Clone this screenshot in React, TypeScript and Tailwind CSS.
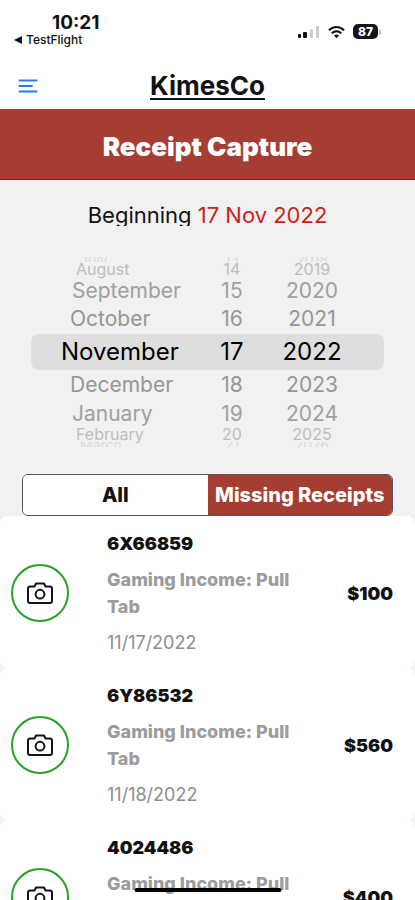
import React, { useState } from "react";

const wheel = [
  { month: "July", day: "13", year: "2018", row: "h-[5px] leading-[5px] overflow-hidden", text: "text-[14px] text-[#d8d8d8]", inset: "pl-20" },
  { month: "August", day: "14", year: "2019", row: "h-[15px] leading-[15px]", text: "text-[16px] text-[#bdbdbd]", inset: "pl-19" },
  { month: "September", day: "15", year: "2020", row: "h-[27px] leading-[27px]", text: "text-[21px] text-[#a0a0a0]", inset: "pl-18" },
  { month: "October", day: "16", year: "2021", row: "h-[30px] leading-[30px]", text: "text-[21px] text-[#969696]", inset: "pl-[70px]" },
  { month: "November", day: "17", year: "2022", row: "h-9 leading-9", text: "text-[24px] text-black", inset: "pl-[61px]" },
  { month: "December", day: "18", year: "2023", row: "h-[30px] leading-[30px]", text: "text-[21px] text-[#969696]", inset: "pl-[70px]" },
  { month: "January", day: "19", year: "2024", row: "h-[27px] leading-[27px]", text: "text-[21px] text-[#a0a0a0]", inset: "pl-18" },
  { month: "February", day: "20", year: "2025", row: "h-[15px] leading-[15px]", text: "text-[16px] text-[#bdbdbd]", inset: "pl-19" },
  { month: "March", day: "21", year: "2026", row: "h-[5px] leading-[5px] overflow-hidden", text: "text-[14px] text-[#d8d8d8]", inset: "pl-20" },
];

const receipts = [
  { id: "6X66859", category: "Gaming Income: Pull Tab", date: "11/17/2022", amount: "$100" },
  { id: "6Y86532", category: "Gaming Income: Pull Tab", date: "11/18/2022", amount: "$560" },
  { id: "4024486", category: "Gaming Income: Pull Tab", date: "11/18/2022", amount: "$400" },
];

function StatusBar() {
  return (
    <div className="flex h-[62px] items-start justify-between pt-3 pr-[34px] pl-[14px]">
      <div>
        <div className="pl-[38px] text-[19px] leading-[22px] font-bold">10:21</div>
        <button className="flex items-center gap-1 text-[12px] leading-[12px] font-medium">
          <svg width="8" height="8" viewBox="0 0 8 8" aria-hidden="true">
            <path d="M0 4 8 0v8z" fill="#111" />
          </svg>
          TestFlight
        </button>
      </div>
      <div className="flex items-center gap-2 pt-3">
        <svg width="22" height="14" viewBox="0 0 22 14" aria-hidden="true">
          <rect x="0" y="9" width="3" height="4" rx="1" fill="#111" />
          <rect x="5" y="7" width="4" height="6" rx="1" fill="#111" />
          <rect x="12" y="4" width="3" height="9" rx="1" fill="#ccc" />
          <rect x="18" y="1" width="3" height="12" rx="1" fill="#ccc" />
        </svg>
        <svg width="17" height="14" viewBox="0 0 17 14" fill="none" stroke="#111" strokeWidth="2.2" aria-hidden="true">
          <path d="M1 5.2c4.4-4.3 10.6-4.3 15 0" />
          <path d="M3.8 8.3c2.8-2.7 6.6-2.7 9.4 0" />
          <path d="M5.9 10.5c1.6-1.4 3.6-1.4 5.2 0L8.5 13.2z" fill="#111" stroke="none" />
        </svg>
        <div className="flex items-center gap-px">
          <span className="flex h-[15px] w-[25px] items-center justify-center rounded-[5px] bg-[#151515] text-[12px] leading-[15px] font-extrabold text-white">87</span>
          <span className="h-[6px] w-[2px] rounded-r-full bg-[#c4c4c4]" />
        </div>
      </div>
    </div>
  );
}

function CameraIcon() {
  return (
    <svg width="28" height="24" viewBox="0 0 28 24" fill="none" stroke="#151515" strokeWidth="2" strokeLinejoin="round" aria-hidden="true">
      <path d="M4 5.500H8.500L10 2.500H18L19.500 5.500H24Q26 5.500 26 7.500V20Q26 22 24 22H4Q2 22 2 20V7.500Q2 5.500 4 5.500Z" />
      <circle cx="14" cy="13.2" r="4.4" />
    </svg>
  );
}

export default function App() {
  const [filter, setFilter] = useState("missing");
  return (
    <div className="relative h-screen overflow-hidden bg-[#f1f1f1] font-['Inter','Liberation_Sans',sans-serif] text-[#111]">
      <header className="bg-white">
        <StatusBar />
        <div className="grid h-[47px] grid-cols-3 items-center px-[18px]">
          <button aria-label="Open menu" className="justify-self-start">
            <svg width="20" height="14" viewBox="0 0 20 14" stroke="#2878e8" strokeWidth="2" strokeLinecap="round" aria-hidden="true">
              <path d="M1.5 1.5h17M1.5 7h12.5M1.5 12.5h17" />
            </svg>
          </button>
          <a href="#home" className="justify-self-center text-[26px] leading-[30px] font-bold underline decoration-2 underline-offset-3">KimesCo</a>
        </div>
      </header>

      <h1 className="flex h-[71px] items-center justify-center border-b border-[#941c14] bg-[#a63d32] pt-1 text-[26px] font-black text-white">Receipt Capture</h1>

      <main>
        <p className="mt-5 h-[26px] overflow-hidden text-center text-[22px] leading-[30px]">
          Beginning <span className="text-[#cc1f1a]">17 Nov 2022</span>
        </p>

        <div className="mt-[31px] flex flex-col" role="group" aria-label="Beginning date">
          {wheel.map((r) => (
            <div key={r.month} className={r.month === "November" ? "mx-[31px] rounded-lg bg-[#dedede]" : "mx-[31px]"}>
              <div className={`-mx-[31px] grid grid-cols-[205px_54px_106px] items-center ${r.row} ${r.text}`}>
                <button className={`text-left ${r.inset}`}>{r.month}</button>
                <button className="text-center">{r.day}</button>
                <button className="text-center">{r.year}</button>
              </div>
            </div>
          ))}
        </div>

        <div className="mx-[22px] mt-[27px] grid h-[42px] grid-cols-2 overflow-hidden rounded-md border border-[#555] text-[20px] font-extrabold">
          <button aria-pressed={filter === "all"} onClick={() => setFilter("all")} className={filter === "all" ? "bg-[#a63d32] text-white" : "bg-white"}>All</button>
          <button aria-pressed={filter === "missing"} onClick={() => setFilter("missing")} className={filter === "missing" ? "bg-[#a63d32] whitespace-nowrap text-white" : "bg-white whitespace-nowrap"}>Missing Receipts</button>
        </div>

        <ul>
          {receipts.map((r) => (
            <li key={r.id} className="flex h-[152px] items-center rounded-lg bg-white pt-0.5 pr-[22px] pl-[11px]">
              <button aria-label={`Capture receipt for ${r.id}`} className="flex size-[58px] shrink-0 items-center justify-center rounded-full border-2 border-[#27a327]">
                <CameraIcon />
              </button>
              <div className="ml-[38px] w-[200px]">
                <h2 className="text-[18px] leading-[27px] font-black">{r.id}</h2>
                <p className="mt-[9px] text-[18px] leading-[27px] font-extrabold text-[#9c9c9c]">{r.category}</p>
                <p className="mt-[9px] text-[18px] leading-[27px] text-[#8e8e8e]">{r.date}</p>
              </div>
              <div className="ml-auto text-[18px] leading-[27px] font-black">{r.amount}</div>
            </li>
          ))}
        </ul>
      </main>
      <div className="absolute bottom-2 left-1/2 h-1 w-[147px] -translate-x-1/2 rounded-full bg-black" />
    </div>
  );
}
